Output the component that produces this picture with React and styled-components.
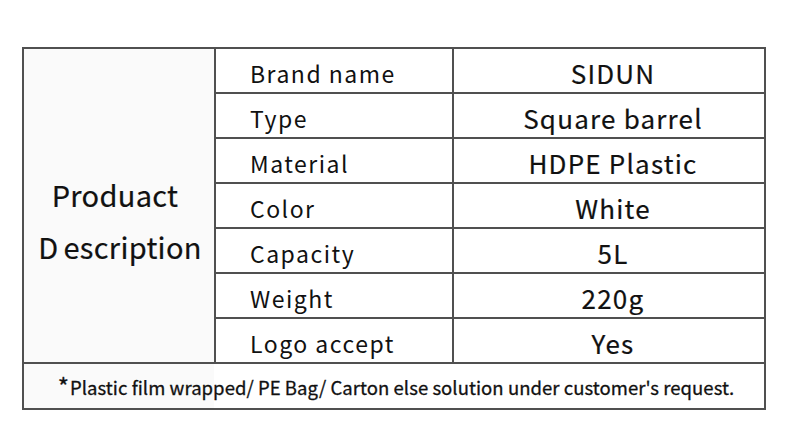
import styled, { createGlobalStyle } from 'styled-components';

const GlobalStyle = createGlobalStyle`
  body {
    margin: 0;
    background: #fff;
    font-family: "Noto Sans CJK SC", "Noto Sans", sans-serif;
    color: #111;
  }
`;

const Sheet = styled.div`
  width: 744px;
  margin: 47px 0 0 22px;
  box-sizing: border-box;
  border: 2px solid #505050;
  background: #505050;
  display: grid;
  grid-template-columns: 190px 236px 310px;
  grid-template-rows: repeat(7, 43px) 44px;
  gap: 2px;
`;

const TitleCell = styled.div`
  grid-row: 1 / span 7;
  background: #fafafa;
  display: flex;
  flex-direction: column;
  align-items: center;
  justify-content: center;
  padding: 28px 0 0 0;
  font-size: 29px;
  line-height: 52px;
  letter-spacing: 0.3px;
  -webkit-text-stroke: 0.2px #111;
`;

const TitleLine = styled.span`
  margin-left: ${p => p.$shift}px;

  b {
    font-weight: 400;
    margin-right: 5px;
  }
`;

const Cell = styled.div`
  background: #fff;
  display: flex;
  align-items: center;
  padding-top: 4px;
  box-sizing: border-box;
  ${p => p.$value
    ? 'justify-content: center; padding-left: 8px; font-size: 26px; letter-spacing: 1.2px; -webkit-text-stroke: 0.2px #111;'
    : 'padding-left: 34px; font-size: 23px; letter-spacing: 1.5px;'}
`;

const Footer = styled.div`
  grid-column: 1 / -1;
  background: linear-gradient(to right, #fafafa 190px, #fff 190px);
  display: flex;
  align-items: center;
  justify-content: center;
  padding: 2px 0 0 4px;
  font-size: 18.5px;
  letter-spacing: 0.05px;
  -webkit-text-stroke: 0.3px #111;

  sup {
    font-size: 24px;
    line-height: 0;
    position: relative;
    top: -1px;
    margin-right: 1px;
  }
`;

const rows = [
  ['Brand name', 'SIDUN'],
  ['Type', 'Square barrel'],
  ['Material', 'HDPE Plastic'],
  ['Color', 'White'],
  ['Capacity', '5L'],
  ['Weight', '220g'],
  ['Logo accept', 'Yes']
];

const App = () => {
  return (
    <>
      <GlobalStyle />
      <Sheet>
        <TitleCell>
          <TitleLine $shift={-8}>Produact</TitleLine>
          <TitleLine $shift={2}><b>D</b>escription</TitleLine>
        </TitleCell>
        {rows.map(([label, value], i) => [
          <Cell key={'l' + i} style={{ gridRow: i + 1, gridColumn: 2 }}>{label}</Cell>,
          <Cell key={'v' + i} $value style={{ gridRow: i + 1, gridColumn: 3 }}>{value}</Cell>
        ])}
        <Footer>
          <sup>*</sup>Plastic film wrapped/ PE Bag/ Carton else solution under customer's request.
        </Footer>
      </Sheet>
    </>
  );
};

export default App;
